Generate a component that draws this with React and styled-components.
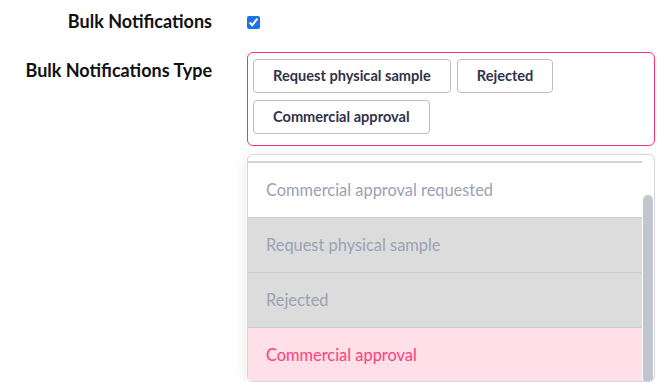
import React from 'react';
import styled, { createGlobalStyle } from 'styled-components';

const GlobalStyle = createGlobalStyle`
  html, body {
    margin: 0;
    padding: 0;
    background: #ffffff;
    overflow: hidden;
  }
  body {
    font-family: Lato, "Open Sans", sans-serif;
  }
`;

const Form = styled.div`
  display: grid;
  grid-template-columns: 212px 408px;
  column-gap: 35px;
  row-gap: 20px;
  padding-top: 10px;
  align-items: start;
`;

const Label = styled.div`
  font-family: Lato, sans-serif;
  font-weight: 700;
  font-size: 18px;
  line-height: 22px;
  color: #111111;
  text-align: right;
  padding-top: ${({ $offset }) => $offset || 0}px;
`;

const CheckCell = styled.div`
  display: flex;
  align-items: center;
  height: 22px;
`;

const Checkbox = styled.input`
  margin: 2px 0 0;
  width: 13px;
  height: 13px;
  accent-color: #1a73e8;
`;

const Field = styled.div`
  display: flex;
  flex-direction: column;
  gap: 8px;
`;

const TagBox = styled.div`
  display: flex;
  flex-wrap: wrap;
  gap: 7px 6px;
  padding: 5.5px 5px 10px;
  border: 1.5px solid #ff2d78;
  border-radius: 6px;
  box-sizing: border-box;
  height: 94px;
  align-content: flex-start;
`;

const Tag = styled.div`
  height: 34px;
  box-sizing: border-box;
  padding: 0 19px;
  display: flex;
  align-items: center;
  border: 1px solid #bdbdbd;
  border-radius: 4px;
  background: #ffffff;
  font-family: Lato, sans-serif;
  font-weight: 700;
  font-size: 14.6px;
  color: #31334b;
`;

const Dropdown = styled.div`
  display: grid;
  grid-template-columns: 1fr 12px;
  height: 228px;
  border: 1px solid #d3d7e0;
  border-radius: 6px;
  box-sizing: border-box;
  background: #ffffff;
  box-shadow: -4px 2px 12px rgba(0, 0, 0, 0.06);
  overflow: hidden;
`;

const List = styled.div`
  display: flex;
  flex-direction: column;
  padding-top: 6px;
`;

const ScrolledEdge = styled.div`
  height: 2px;
  flex-shrink: 0;
  background: #cfd3dc;
`;

const Option = styled.div`
  height: 55px;
  flex-shrink: 0;
  display: flex;
  align-items: center;
  padding: 0 0 2px 18px;
  box-sizing: border-box;
  border-bottom: 1px solid #c9cdd8;
  font-family: Lato, sans-serif;
  font-size: 16.4px;
  color: ${({ $selected }) => ($selected ? '#ff3d7f' : '#9aa1b5')};
  background: ${({ $selected, $chosen }) =>
    $selected ? '#ffdfe8' : $chosen ? '#dcdcdc' : '#ffffff'};

  &:last-child {
    border-bottom: none;
  }
`;

const Track = styled.div`
  display: flex;
  flex-direction: column;
  padding: 40px 1px 0;
`;

const Thumb = styled.div`
  flex: 1;
  background: #c1c5d0;
  border-radius: 6px;
`;

const options = [
  { label: 'Commercial approval requested' },
  { label: 'Request physical sample', chosen: true },
  { label: 'Rejected', chosen: true },
  { label: 'Commercial approval', selected: true },
];

const tags = ['Request physical sample', 'Rejected', 'Commercial approval'];

export default function App() {
  return (
    <>
      <GlobalStyle />
      <Form>
        <Label>Bulk Notifications</Label>
        <CheckCell>
          <Checkbox type="checkbox" defaultChecked />
        </CheckCell>
        <Label $offset={7}>Bulk Notifications Type</Label>
        <Field>
          <TagBox>
            {tags.map((t) => (
              <Tag key={t}>{t}</Tag>
            ))}
          </TagBox>
          <Dropdown>
            <List>
              <ScrolledEdge />
              {options.map((o) => (
                <Option key={o.label} $chosen={o.chosen} $selected={o.selected}>
                  {o.label}
                </Option>
              ))}
            </List>
            <Track>
              <Thumb />
            </Track>
          </Dropdown>
        </Field>
      </Form>
    </>
  );
}
